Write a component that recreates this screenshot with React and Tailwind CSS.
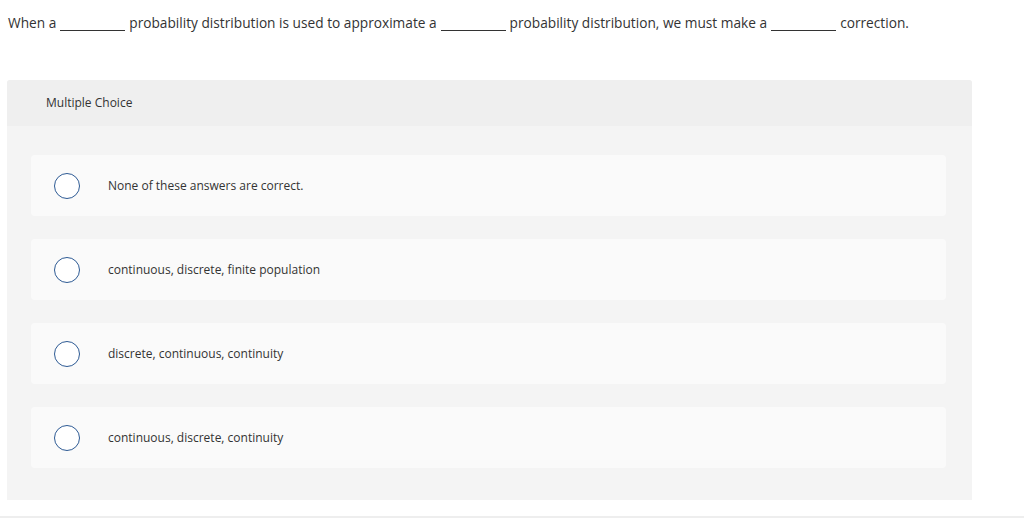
const options = [
  'None of these answers are correct.',
  'continuous, discrete, finite population',
  'discrete, continuous, continuity',
  'continuous, discrete, continuity',
];

function Blank() {
  return <span className="inline-block w-[65px] h-[1px] bg-[#333] mx-[4px] align-[-3px]" />;
}

export default function App() {
  return (
    <div className="w-[1024px] h-[518px] bg-white text-[#333] overflow-hidden relative" style={{ fontFamily: '"Open Sans", sans-serif' }}>
      <p className="pl-[8px] pt-[14px] text-[13.7px] leading-[17px] whitespace-nowrap">
        When a<Blank />probability distribution is used to approximate a<Blank />probability distribution, we must make a<Blank />correction.
      </p>
      <div className="ml-[7px] mt-[49px] w-[965px] bg-[#f4f4f4] rounded-t-[3px]">
        <div className="h-[46px] bg-[#efefef] pl-[39px] flex items-center text-[12px] rounded-t-[3px]">Multiple Choice</div>
        <div className="pl-[24px] pr-[26px] pt-[29px] pb-[32px] flex flex-col gap-[23px]">
          {options.map((o) => (
            <div key={o} className="h-[61px] bg-[#fafafa] rounded-[4px] flex items-center pl-[23px]">
              <span className="w-[26px] h-[26px] rounded-full border border-[#2d5a94] bg-white shrink-0" />
              <span className="ml-[28px] text-[12px]">{o}</span>
            </div>
          ))}
        </div>
      </div>
      <div className="absolute left-0 right-0 bottom-0 h-[2px] bg-[#eeeeee]" />
    </div>
  );
}
